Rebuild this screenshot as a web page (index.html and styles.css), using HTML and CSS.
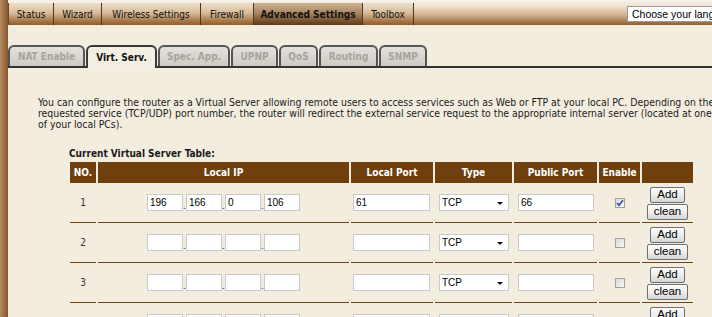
FILE: index.html
```html
<!DOCTYPE html>
<html>
<head>
<meta charset="utf-8">
<title>Virtual Server</title>
<link rel="stylesheet" href="styles.css">
</head>
<body>
<div class="page">
  <div class="strip"></div>
  <div class="main">
    <div class="topbar">
      <ul class="nav">
        <li class="nav-item first n-status">Status</li>
        <li class="nav-item n-wizard">Wizard</li>
        <li class="nav-item n-wireless">Wireless Settings</li>
        <li class="nav-item n-firewall">Firewall</li>
        <li class="nav-item active n-adv">Advanced Settings</li>
        <li class="nav-item n-toolbox">Toolbox</li>
      </ul>
      <div class="lang">Choose your language</div>
    </div>

    <div class="tabs">
      <div class="tab t-nat">NAT Enable</div>
      <div class="tab active t-virt">Virt. Serv.</div>
      <div class="tab t-spec">Spec. App.</div>
      <div class="tab t-upnp">UPNP</div>
      <div class="tab t-qos">QoS</div>
      <div class="tab t-route">Routing</div>
      <div class="tab t-snmp">SNMP</div>
    </div>

    <p class="intro">You can configure the router as a Virtual Server allowing remote users to access services such as Web or FTP at your local PC. Depending on the<br>requested service (TCP/UDP) port number, the router will redirect the external service request to the appropriate internal server (located at one<br>of your local PCs).</p>

    <div class="vs">
      <div class="caption">Current Virtual Server Table:</div>
      <table class="vs-table">
        <colgroup>
          <col class="c-no"><col class="c-ip"><col class="c-lport"><col class="c-type"><col class="c-pport"><col class="c-en"><col class="c-act">
        </colgroup>
        <thead>
          <tr><th>NO.</th><th>Local IP</th><th>Local Port</th><th>Type</th><th>Public Port</th><th>Enable</th><th></th></tr>
        </thead>
        <tbody>
          <tr>
            <td class="num">1</td>
            <td class="ip"><span class="ipbox"><input class="oct" value="196"><span class="dot">.</span><input class="oct" value="166"><span class="dot">.</span><input class="oct" value="0"><span class="dot">.</span><input class="oct" value="106"></span></td>
            <td class="lport"><input class="port" value="61"></td>
            <td class="type"><span class="sel"><select><option>TCP</option></select></span></td>
            <td class="pport"><input class="port2" value="66"></td>
            <td class="en"><span class="chk checked"><svg width="8" height="8" viewBox="0 0 8 8"><path d="M1 4 L3 6.2 L7 1.2" fill="none" stroke="#2c4fb5" stroke-width="1.6"/></svg></span></td>
            <td class="act"><div class="actions"><button class="btn add">Add</button><button class="btn clean">clean</button></div></td>
          </tr>
          <tr>
            <td class="num">2</td>
            <td class="ip"><span class="ipbox"><input class="oct"><span class="dot">.</span><input class="oct"><span class="dot">.</span><input class="oct"><span class="dot">.</span><input class="oct"></span></td>
            <td class="lport"><input class="port"></td>
            <td class="type"><span class="sel"><select><option>TCP</option></select></span></td>
            <td class="pport"><input class="port2"></td>
            <td class="en"><span class="chk"></span></td>
            <td class="act"><div class="actions"><button class="btn add">Add</button><button class="btn clean">clean</button></div></td>
          </tr>
          <tr>
            <td class="num">3</td>
            <td class="ip"><span class="ipbox"><input class="oct"><span class="dot">.</span><input class="oct"><span class="dot">.</span><input class="oct"><span class="dot">.</span><input class="oct"></span></td>
            <td class="lport"><input class="port"></td>
            <td class="type"><span class="sel"><select><option>TCP</option></select></span></td>
            <td class="pport"><input class="port2"></td>
            <td class="en"><span class="chk"></span></td>
            <td class="act"><div class="actions"><button class="btn add">Add</button><button class="btn clean">clean</button></div></td>
          </tr>
          <tr>
            <td class="num">4</td>
            <td class="ip"><span class="ipbox"><input class="oct"><span class="dot">.</span><input class="oct"><span class="dot">.</span><input class="oct"><span class="dot">.</span><input class="oct"></span></td>
            <td class="lport"><input class="port"></td>
            <td class="type"><span class="sel"><select><option>TCP</option></select></span></td>
            <td class="pport"><input class="port2"></td>
            <td class="en"><span class="chk"></span></td>
            <td class="act"><div class="actions"><button class="btn add">Add</button><button class="btn clean">clean</button></div></td>
          </tr>
        </tbody>
      </table>
    </div>
  </div>
</div>
</body>
</html>
```
FILE: styles.css
```css
html, body {
  margin: 0;
  height: 100%;
  overflow: hidden;
}
body {
  background: #f3ede0;
  font-family: "DejaVu Sans Condensed", "DejaVu Sans", sans-serif;
  font-stretch: condensed;
  font-size: 10px;
  color: #111;
}
.page {
  display: flex;
  min-height: 100%;
}
.strip {
  width: 8px;
  flex-shrink: 0;
  background: linear-gradient(to right, #b78b5e, #9a6b3f 60%, #7e5431);
}
.main {
  width: 730px;
  flex-shrink: 0;
  overflow: hidden;
}

/* top navigation */
.topbar {
  display: flex;
  height: 25px;
  background: linear-gradient(#f7f3ec 0%, #efe3d1 25%, #cfae88 62%, #8d5d2e 100%);
}
.nav {
  display: flex;
  list-style: none;
  margin: 0;
  padding: 0;
}
.nav-item {
  box-sizing: border-box;
  margin-top: 3px;
  height: 22px;
  display: flex;
  align-items: center;
  justify-content: center;
  background: linear-gradient(#ecdfcb 0%, #d7bc9a 45%, #a87a4b 80%, #8e5e2f 100%);
  border-right: 1px solid #4e341c;
  color: #111;
  white-space: nowrap;
}
.nav-item.first {
  border-left: 1px solid #6a4826;
}
.nav-item.active {
  font-weight: bold;
  background: linear-gradient(#cdb596 0%, #a98660 45%, #7b5430 80%, #5e3b1a 100%);
}
.n-status { width: 46px; }
.n-wizard { width: 48px; }
.n-wireless { width: 99px; }
.n-firewall { width: 53px; }
.n-adv { width: 109px; }
.n-toolbox { width: 51px; }

.lang {
  margin-left: auto;
  margin-top: 6px;
  width: 111px;
  height: 16px;
  box-sizing: border-box;
  background: #fff;
  border: 1px solid #9a9a9a;
  font-family: "Liberation Sans", Arial, sans-serif;
  font-size: 10.5px;
  line-height: 14px;
  padding-left: 4px;
  color: #000;
  white-space: nowrap;
  overflow: hidden;
}

/* sub tabs */
.tabs {
  display: flex;
  align-items: flex-end;
  margin-top: 20px;
  border-bottom: 2px solid #333;
  height: 21px;
}
.tab {
  box-sizing: border-box;
  height: 21px;
  display: flex;
  align-items: center;
  justify-content: center;
  margin-right: 1px;
  border: 2px solid #555;
  border-bottom: none;
  border-radius: 6px 6px 0 0;
  background: linear-gradient(#e4e1dc, #cfcbc4);
  color: #a7a39d;
  font-weight: bold;
  white-space: nowrap;
}
.tab.active {
  height: 23px;
  margin-bottom: -2px;
  background: #f3eee4;
  color: #111;
  border-color: #3a3a3a;
}
.t-nat { width: 77px; }
.t-virt { width: 71px; }
.t-spec { width: 72px; }
.t-upnp { width: 47px; }
.t-qos { width: 39px; }
.t-route { width: 59px; }
.t-snmp { width: 48px; }

/* intro text */
.intro {
  margin: 29px 0 0 30px;
  font-size: 10.4px;
  line-height: 11px;
  white-space: nowrap;
  color: #1a1a1a;
}

/* table */
.vs {
  margin: 18px 0 0 60px;
}
.caption {
  margin-left: 1px;
  font-weight: bold;
  line-height: 11px;
  color: #1a1a1a;
}
.vs-table {
  margin-top: 3px;
  border-collapse: separate;
  border-spacing: 2px 0;
  table-layout: fixed;
  width: 627px;
}
.c-no { width: 26px; }
.c-ip { width: 251px; }
.c-lport { width: 82px; }
.c-type { width: 77px; }
.c-pport { width: 83px; }
.c-en { width: 41px; }
.c-act { width: 51px; }

.vs-table th {
  height: 21px;
  padding: 0;
  background: #6f3f0e;
  color: #fff;
  font-weight: bold;
  text-align: center;
}
.vs-table td {
  box-sizing: border-box;
  height: 40px;
  padding: 0;
  border-bottom: 1px solid #74440f;
  vertical-align: middle;
}
.num {
  text-align: center;
  color: #333;
}
.ip {
  text-align: center;
}
.ipbox {
  display: inline-flex;
  align-items: flex-end;
}
input {
  box-sizing: border-box;
  height: 17px;
  margin: 0;
  border: 1px solid #c9c9c9;
  background: #fff;
  font-family: "Liberation Sans", Arial, sans-serif;
  font-size: 10px;
  padding: 0 2px;
  color: #000;
  outline: none;
}
.oct { width: 36px; }
.dot {
  width: 3px;
  font-family: "Liberation Sans", Arial, sans-serif;
  font-size: 10px;
  line-height: 10px;
  overflow: visible;
  color: #333;
}
.vs-table td.lport { padding-left: 2px; }
.port { width: 77px; }
.vs-table td.type { padding-left: 4px; }
.vs-table td.pport { padding-left: 4px; }
.port2 { width: 76px; }

.sel {
  position: relative;
  display: inline-block;
  vertical-align: middle;
}
.sel select {
  -webkit-appearance: none;
  appearance: none;
  box-sizing: border-box;
  width: 70px;
  height: 17px;
  margin: 0;
  border: 1px solid #c9c9c9;
  background: #fff;
  font-family: "Liberation Sans", Arial, sans-serif;
  font-size: 10px;
  padding: 0 2px;
  color: #000;
}
.sel::after {
  content: "";
  position: absolute;
  right: 6px;
  top: 8px;
  border-left: 3px solid transparent;
  border-right: 3px solid transparent;
  border-top: 3px solid #111;
}

.en {
  text-align: center;
}
.chk {
  display: inline-flex;
  align-items: center;
  justify-content: center;
  vertical-align: middle;
  box-sizing: border-box;
  width: 10px;
  height: 10px;
  border: 1px solid #a0a0a0;
  background: linear-gradient(135deg, #d8d8d8, #f8f8f8);
}

.actions {
  display: flex;
  flex-direction: column;
  align-items: center;
  gap: 1px;
  padding-top: 1px;
}
.btn {
  box-sizing: border-box;
  height: 16px;
  padding: 0;
  border: 1px solid #6f6f6f;
  border-radius: 2px;
  background: linear-gradient(#fefefe, #ececec 55%, #d4d4d4);
  font-family: "Liberation Sans", Arial, sans-serif;
  font-size: 11.5px;
  line-height: 13px;
  color: #000;
}
.btn.add { width: 35px; }
.btn.clean { width: 41px; }
```
